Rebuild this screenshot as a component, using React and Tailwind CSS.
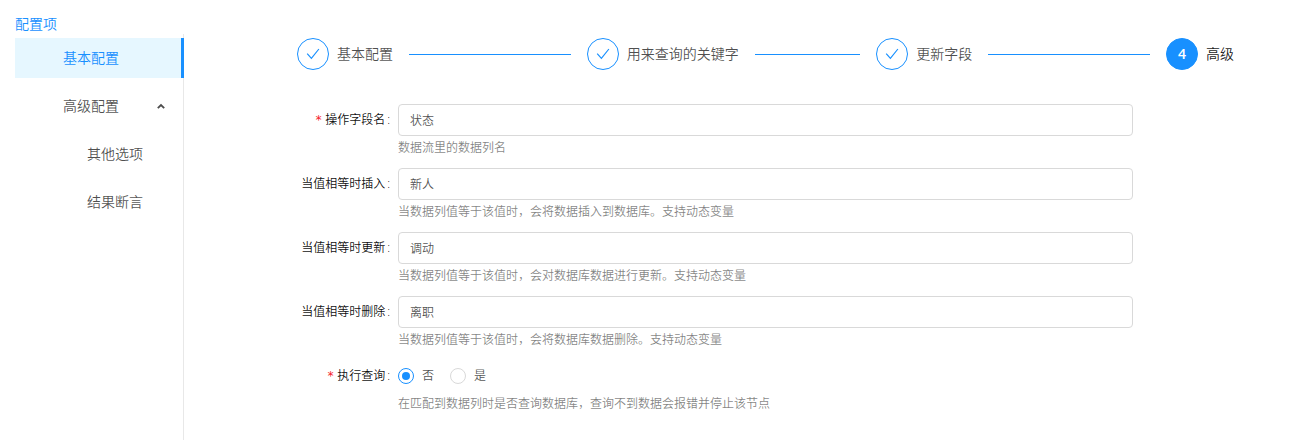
import React, { useState } from 'react';
import clsx from 'clsx';

const STEPS = ['基本配置', '用来查询的关键字', '更新字段', '高级'];

const TEXT_FIELDS = [
  { name: 'action', label: '操作字段名', value: '状态', help: '数据流里的数据列名', required: true },
  { name: 'insert', label: '当值相等时插入', value: '新人', help: '当数据列值等于该值时，会将数据插入到数据库。支持动态变量' },
  { name: 'update', label: '当值相等时更新', value: '调动', help: '当数据列值等于该值时，会对数据库数据进行更新。支持动态变量' },
  { name: 'remove', label: '当值相等时删除', value: '离职', help: '当数据列值等于该值时，会将数据库数据删除。支持动态变量' },
];

const CheckIcon = () => (
  <svg viewBox="0 0 16 16" className="size-4" fill="none" stroke="currentColor" strokeWidth="1.2" aria-hidden="true">
    <path d="M2.2 7.6 L6.4 12.4 L13.9 3" />
  </svg>
);

const MenuItem = ({ active, nested, open, onClick, children }) => (
  <li>
    <button
      type="button"
      onClick={onClick}
      aria-expanded={open}
      className={clsx(
        'flex h-10 w-[calc(100%+1px)] cursor-pointer items-center justify-between border-r-3 pr-4',
        nested ? 'pl-[72px]' : 'pl-12',
        active ? 'border-[#1890ff] bg-[#e6f7ff] text-[#1890ff]' : 'border-transparent hover:text-[#1890ff]'
      )}
    >
      {children}
      {open !== undefined && (
        <svg
          viewBox="0 0 8 6"
          className={clsx('h-[6px] w-2', !open && 'rotate-180')}
          fill="none"
          stroke="currentColor"
          strokeWidth="1.8"
          aria-hidden="true"
        >
          <path d="M0.8 5.2 L4 2 L7.2 5.2" />
        </svg>
      )}
    </button>
  </li>
);

const Sidebar = () => {
  const [selected, setSelected] = useState('基本配置');
  const [open, setOpen] = useState(true);

  return (
    <aside className="ml-[15px] flex w-[169px] shrink-0 flex-col">
      <h2 className="pt-[14px] leading-5 text-[#1890ff]">配置项</h2>
      <ul className="flex flex-1 flex-col gap-2 border-r border-[#e8e8e8] pt-1">
        <MenuItem active={selected === '基本配置'} onClick={() => setSelected('基本配置')}>
          基本配置
        </MenuItem>
        <MenuItem open={open} onClick={() => setOpen(!open)}>
          高级配置
        </MenuItem>
        {open && ['其他选项', '结果断言'].map((item) => (
          <MenuItem key={item} nested active={selected === item} onClick={() => setSelected(item)}>
            {item}
          </MenuItem>
        ))}
      </ul>
    </aside>
  );
};

const Steps = ({ current }) => (
  <ol className="flex gap-4">
    {STEPS.map((title, index) => {
      const done = index < current;
      return (
        <li key={title} className={clsx('flex items-center', index < STEPS.length - 1 && 'flex-1')}>
          <span
            className={clsx(
              'mr-2 flex size-8 shrink-0 items-center justify-center rounded-full border border-[#1890ff] font-semibold',
              done ? 'bg-white text-[#1890ff]' : 'bg-[#1890ff] text-white'
            )}
          >
            {done ? <CheckIcon /> : index + 1}
          </span>
          <span className={clsx('whitespace-nowrap', done ? 'text-black/70' : 'text-black/90')}>{title}</span>
          {index < STEPS.length - 1 && <span className="ml-4 h-px flex-1 bg-[#1890ff]" />}
        </li>
      );
    })}
  </ol>
);

const labelClass = 'whitespace-nowrap pr-2 text-right leading-8 text-black/95';

const LabelText = ({ required, children }) => (
  <>
    {required && <span className="mr-[3px] font-['DejaVu_Sans_Mono'] text-[#f5222d]">*</span>}
    {children}
    <span className="ml-[2px]">:</span>
  </>
);

const rowClass = 'grid grid-cols-[101px_minmax(0,1fr)_101px] text-xs';

const TextField = ({ name, label, value, help, required }) => (
  <div className={rowClass}>
    <label htmlFor={name} className={labelClass}>
      <LabelText required={required}>{label}</LabelText>
    </label>
    <div>
      <input
        id={name}
        type="text"
        defaultValue={value}
        className="block h-8 w-full rounded border border-[#d9d9d9] bg-white px-[11px] text-black/70 outline-none focus:border-[#40a9ff]"
      />
      <p className="h-8 leading-6 text-black/50">{help}</p>
    </div>
  </div>
);

const App = () => {
  const [query, setQuery] = useState('否');

  return (
    <div className="flex min-h-screen bg-white font-['Open_Sans','Noto_Sans_CJK_SC',sans-serif] text-sm font-[350] text-black/70">
      <Sidebar />
      <main className="min-w-0 flex-1 pt-[38px] pr-[71px] pl-[113px]">
        <Steps current={3} />
        <form className="mt-[34px]">
          {TEXT_FIELDS.map((field) => (
            <TextField key={field.name} {...field} />
          ))}

          <div className={rowClass} role="radiogroup" aria-labelledby="query-label">
            <span id="query-label" className={labelClass}>
              <LabelText required>执行查询</LabelText>
            </span>
            <div>
              <div className="flex h-8 items-center gap-4">
                {['否', '是'].map((option) => (
                  <label key={option} className="flex items-center gap-2">
                    <input
                      type="radio"
                      name="query"
                      value={option}
                      checked={query === option}
                      onChange={() => setQuery(option)}
                      className="size-4 appearance-none rounded-full border border-[#d9d9d9] bg-clip-content p-[3px] checked:border-[#1890ff] checked:bg-[#1890ff]"
                    />
                    {option}
                  </label>
                ))}
              </div>
              <p className="leading-6 text-black/50">在匹配到数据列时是否查询数据库，查询不到数据会报错并停止该节点</p>
            </div>
          </div>
        </form>
      </main>
    </div>
  );
};

export default App;
